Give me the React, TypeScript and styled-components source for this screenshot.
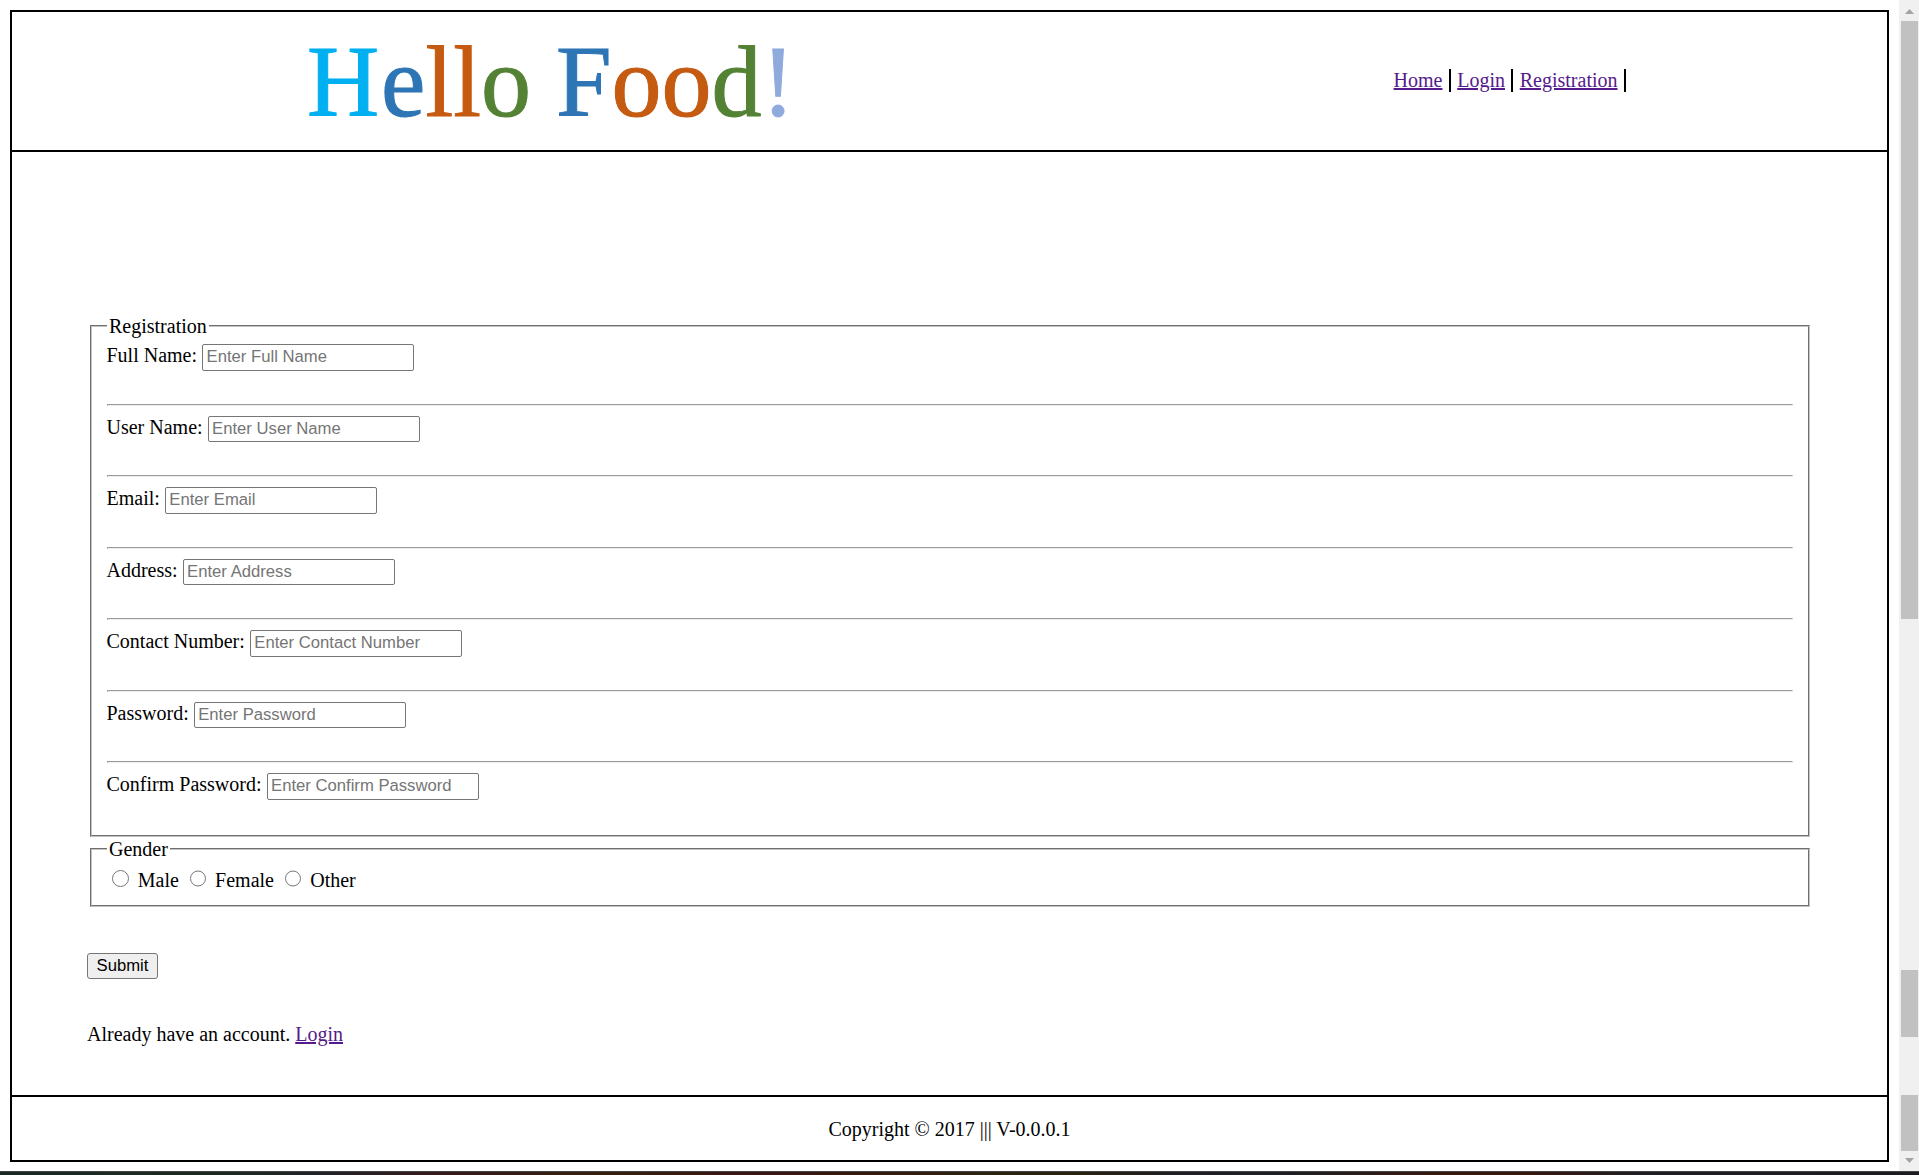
import React from "react";
import styled, { createGlobalStyle } from "styled-components";

const GlobalStyle = createGlobalStyle`
  * { box-sizing: border-box; }
  body {
    margin: 0;
    overflow: hidden;
    background: #fff;
    color: #000;
    font: 20px/23px "Liberation Serif", "Times New Roman", serif;
  }
`;

const Screen = styled.div`
  display: grid;
  grid-template: 1171px 4px / 1fr 20px;
  height: 1175px;
`;

const Page = styled.div`
  display: flex;
  padding: 10px 10px 9px;
`;

const Frame = styled.div`
  flex: 1;
  display: flex;
  flex-direction: column;
  border: 2px solid #000;
`;

const Header = styled.header`
  display: flex;
  align-items: center;
  justify-content: space-between;
  height: 140px;
  padding: 0 261px 0 288px;
  border-bottom: 2px solid #000;
`;

const Logo = styled.svg`
  width: 500px;
  height: 120px;
  font: 100px "Liberation Serif", "Times New Roman", serif;
  stroke-width: 1px;
`;

const Nav = styled.nav`
  display: flex;
  gap: 6.25px;
  margin-bottom: 1px;
`;

const NavItem = styled.span`
  height: 23px;
  padding-right: 6.5px;
  border-right: 2px solid #000;
`;

const Link = styled.a`
  color: #551a8b;
  text-decoration: underline;
  text-decoration-thickness: 2px;
`;

const Main = styled.main`
  flex: 1;
  padding: 161px 75px 0;
`;

const Group = styled.fieldset<{ $height: number }>`
  height: ${(p) => p.$height}px;
  margin: 0 2px -1px 3px;
  padding: 6px 15px 0 14.5px;
  border: 2px groove #c3c3c3;
  min-width: 0;
`;

const Legend = styled.legend`
  padding: 2px 2.5px 0;
`;

const Row = styled.div`
  height: 71.5px;
`;

const Field = styled.label`
  display: flex;
  align-items: baseline;
  gap: 5px;
  height: 59.5px;
`;

const TextInput = styled.input`
  width: 212px;
  height: 26.5px;
  padding: 1px 3.5px;
  border: 1px solid #767676;
  border-radius: 2px;
  font: 16.667px "Liberation Sans", Arial, sans-serif;
  outline: none;
  &::placeholder { color: #757575; }
`;

const Rule = styled.hr`
  height: 2px;
  margin: 0;
  border: 1px solid;
  border-color: #9a9a9a #eee #eee #9a9a9a;
`;

const Radio = styled.input`
  width: 16.25px;
  height: 16.25px;
  margin: 3.25px 4.25px 1.75px 5.75px;
`;

const Submit = styled.button`
  display: block;
  width: 71px;
  height: 26px;
  margin-top: 47px;
  padding: 0;
  border: 1px solid #767676;
  border-radius: 3px;
  background: #efefef;
  color: #000;
  font: 16.667px "Liberation Sans", Arial, sans-serif;
`;

const Account = styled.p`
  margin: 44px 0 0;
`;

const Footer = styled.footer`
  display: flex;
  align-items: center;
  justify-content: center;
  height: 65px;
  padding-top: 2px;
  border-top: 2px solid #000;
`;

const Scrollbar = styled.div`
  display: flex;
  flex-direction: column;
  padding: 0 1px 0 2px;
  background: #f0f0f0;
`;

const Thumb = styled.div<{ $gap: number; $size: number }>`
  height: ${(p) => p.$size}px;
  margin-top: ${(p) => p.$gap}px;
  background: #c1c1c1;
`;

const Arrow = styled.svg<{ $height: number }>`
  display: block;
  width: 17px;
  height: ${(p) => p.$height}px;
  fill: #a3a3a3;
`;

const Taskbar = styled.div`
  grid-column: 1 / -1;
  border-top: 1px solid #454545;
  background: linear-gradient(
    90deg,
    #1b2926 0, #1b2a20 200px, #202226 320px, #35191a 440px, #33200f 600px,
    #3a1512 740px, #35180f 850px, #2c2210 980px, #28210f 1080px,
    #1e1e24 1180px, #1c1f24 1280px, #35190f 1430px, #35180f 1530px,
    #1f1d21 1640px, #1b1b20 100%
  );
`;

const letters = [
  ["H", "#00b0f0"], ["e", "#2e75b6"], ["l", "#c55a11"], ["l", "#c55a11"],
  ["o", "#548235"], [" ", "#548235"], ["F", "#2e75b6"], ["o", "#c55a11"],
  ["o", "#c55a11"], ["d", "#548235"], ["!", "#8faadc"],
];

const fields = [
  ["Full Name", "text"], ["User Name", "text"], ["Email", "text"],
  ["Address", "text"], ["Contact Number", "text"],
  ["Password", "password"], ["Confirm Password", "password"],
];

export default function App() {
  return (
    <>
      <GlobalStyle />
      <Screen>
        <Page>
          <Frame>
            <Header>
              <Logo viewBox="0 0 500 120" aria-label="Hello Food!">
                <text transform="translate(7 94.500) scale(1 1.02)" xmlSpace="preserve">
                  {letters.map(([char, color], i) => (
                    <tspan key={i} fill={color} stroke={color} dx={i === 1 ? 1.8 : 0}>{char}</tspan>
                  ))}
                </text>
              </Logo>
              <Nav>
                {["Home", "Login", "Registration"].map((name) => (
                  <NavItem key={name}><Link href="#">{name}</Link></NavItem>
                ))}
              </Nav>
            </Header>
            <Main>
              <Group $height={524}>
                <Legend>Registration</Legend>
                {fields.map(([name, type], i) => (
                  <Row key={name}>
                    <Field>
                      {name}:
                      <TextInput type={type} placeholder={`Enter ${name}`} />
                    </Field>
                    {i < fields.length - 1 && <Rule />}
                  </Row>
                ))}
              </Group>
              <Group $height={71}>
                <Legend>Gender</Legend>
                {["Male", "Female", "Other"].map((name) => (
                  <React.Fragment key={name}>
                    <Radio type="radio" name="gender" aria-label={name} /> {name}{" "}
                  </React.Fragment>
                ))}
              </Group>
              <Submit>Submit</Submit>
              <Account>Already have an account. <Link href="#">Login</Link></Account>
            </Main>
            <Footer>Copyright © 2017 ||| V-0.0.0.1</Footer>
          </Frame>
        </Page>
        <Scrollbar>
          <Arrow $height={21} viewBox="0 0 17 21"><path d="M4 14 8.500 9 13 14Z" /></Arrow>
          <Thumb $gap={0} $size={598} />
          <Thumb $gap={351} $size={67} />
          <Thumb $gap={58} $size={56} />
          <Arrow $height={20} viewBox="0 0 17 20"><path d="M4 7 8.500 12 13 7Z" /></Arrow>
        </Scrollbar>
        <Taskbar />
      </Screen>
    </>
  );
}
